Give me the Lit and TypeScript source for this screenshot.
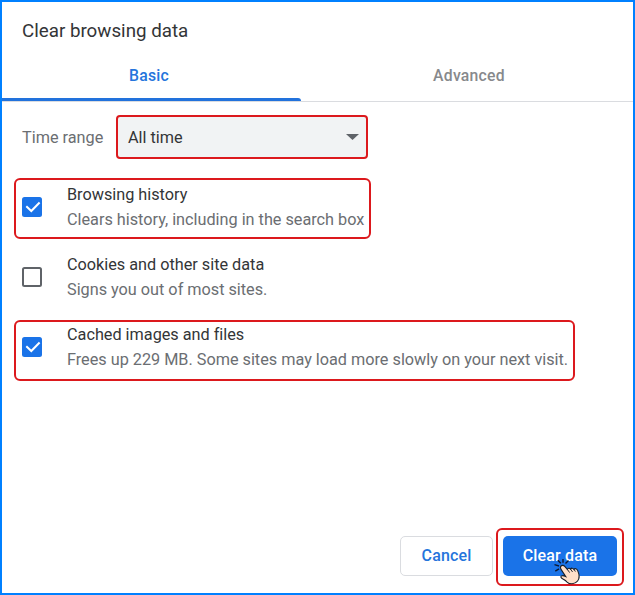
import { LitElement, html, css, nothing } from "lit";
import { customElement, property } from "lit/decorators.js";

@customElement("data-option")
class DataOption extends LitElement {
  @property() label = "";
  @property() detail = "";
  @property({ type: Boolean }) checked = false;

  static styles = css`
    :host { display: flex; align-items: center; box-sizing: border-box; width: max-content;
      height: 61px; padding: 0 5px 3px 6px; border: 2px solid transparent; border-radius: 6px; }
    :host([marked]) { border-color: #dc191d; }
    .box { box-sizing: border-box; width: 20px; height: 20px; flex: none; border: 2px solid #5f6368;
      border-radius: 2.5px; margin: 0 25px 0 0; }
    .on { border: 0; background: #1a73e8; }
    svg { display: block; width: 20px; height: 20px; }
    .texts { display: flex; flex-direction: column; line-height: 25px; font-size: 16.25px;
      white-space: nowrap; }
    .label { color: #333537; letter-spacing: -0.01px; }
    .detail { color: #6b6e72; letter-spacing: -0.01px; }
  `;

  render() {
    return html`
      <div class="box ${this.checked ? "on" : ""}">
        ${this.checked
          ? html`<svg viewBox="0 0 20 20"><path d="M4.3 9.2 L9.3 14 L17.6 5.5" fill="none" stroke="#fff" stroke-width="2"/></svg>`
          : nothing}
      </div>
      <div class="texts">
        <span class="label">${this.label}</span>
        <span class="detail">${this.detail}</span>
      </div>`;
  }
}

@customElement("app-root")
class AppRoot extends LitElement {
  static styles = css`
    :host { display: flex; flex-direction: column; box-sizing: border-box; width: 635px; height: 595px;
      border: 2px solid #0080ff; background: #fff; overflow: hidden; font-family: Roboto, sans-serif; }
    .title { margin: 0; padding: 16px 20px 0; height: 31px; line-height: 26px; font-size: 18.75px;
      font-weight: 400; color: #333537; flex: none; }
    .tabs { display: flex; height: 52px; flex: none; border-bottom: 1px solid #dadce0; font-size: 15.75px; font-weight: 500;
      letter-spacing: 0.25px; line-height: 54px; text-align: center; }
    .tab { flex: 1; box-sizing: border-box; color: #87898c; padding-left: 4px; }
    .active { flex: none; width: 299px; padding: 0 5px 0 0; color: #2575dc; position: relative; }
    .active::after { content: ""; position: absolute; left: 0; right: 0; bottom: 0; height: 3px;
      background: #2272dc; border-radius: 0 3px 0 0; }
    .range { display: flex; align-items: center; margin: 13px 0 0 20px; height: 44px; font-size: 16.25px; color: #6b6e72; flex: none; }
    .range-label { width: 94px; }
    .select { display: flex; align-items: center; justify-content: space-between; box-sizing: border-box;
      width: 252px; height: 44px; padding: 0 7px 0 10px; border: 2px solid #dc191d; border-radius: 4px;
      background: #f1f3f4; color: #333537; }
    .arrow { width: 13px; height: 6px; }
    .options { display: flex; flex-direction: column; gap: 9px; margin: 19px 0 0 12px; flex: none; }
    .last { margin-top: 2px; padding-bottom: 7px; }
    .actions { display: flex; align-items: flex-start; justify-content: flex-end; gap: 3px; margin: auto 9px 7px 0; flex: none; }
    button { font: 500 16px Roboto, sans-serif; letter-spacing: 0.15px; box-sizing: border-box; height: 40px; border-radius: 5px; padding: 0 0 2px; }
    .cancel { width: 93px; margin-top: 8px; background: #fff; border: 1px solid #dadce0; color: #2575dc; }
    .confirm { position: relative; box-sizing: border-box; height: 58px; padding: 6px 5px; border: 2px solid #dc191d; border-radius: 6px; }
    .clear { display: block; width: 114px; background: #1a73e8; color: #fff; border: 0; }
    .hand { position: absolute; left: 55px; top: 27px; width: 30px; height: 28px; }
  `;

  render() {
    return html`
      <h1 class="title">Clear browsing data</h1>
      <div class="tabs"><div class="tab active">Basic</div><div class="tab">Advanced</div></div>
      <div class="range">
        <span class="range-label">Time range</span>
        <div class="select">All time
          <svg class="arrow" viewBox="0 0 13 6"><path d="M0 0H13L6.5 6Z" fill="#5f6368"/></svg>
        </div>
      </div>
      <div class="options">
        <data-option marked checked label="Browsing history" detail="Clears history, including in the search box"></data-option>
        <data-option label="Cookies and other site data" detail="Signs you out of most sites."></data-option>
        <data-option class="last" marked checked label="Cached images and files" detail="Frees up 229 MB. Some sites may load more slowly on your next visit."></data-option>
      </div>
      <div class="actions">
        <button class="cancel">Cancel</button>
        <div class="confirm">
          <button class="clear">Clear data</button>
          <svg class="hand" viewBox="0 0 30 28">
            <path d="M1.5 7.6L6 9M4.8 3.2L7.8 6.3M10 2V5.8M15.5 3.6L12.5 6.5M2.3 14.2L6 11.8" fill="none" stroke="#0d1830" stroke-width="1.4"/>
            <path d="M8 9C7 10 7.4 11.4 8.2 12.6L12.6 19.4C10.2 18.2 7.6 18.4 7.9 20.2C8.2 21.8 11.6 22.4 13.8 24.8C16.6 27.6 21.8 27.6 24.6 24C27.6 20.4 26 16.6 24.6 13.4C23.8 11.5 21.8 11.2 21 12.4C20 10.8 18.2 10.8 17.6 12.2C16.6 11 15 11 14.4 12.4L11.7 9.4C10.6 8.2 9 8 8 9Z" fill="#ffdfc9" stroke="#17202b" stroke-width="1.1"/>
            <path d="M14.4 12.4L16.6 15.6M17.6 12.2L19.6 15M21 12.4L22.4 14.6" fill="none" stroke="#17202b" stroke-width=".9"/>
          </svg>
        </div>
      </div>`;
  }
}
